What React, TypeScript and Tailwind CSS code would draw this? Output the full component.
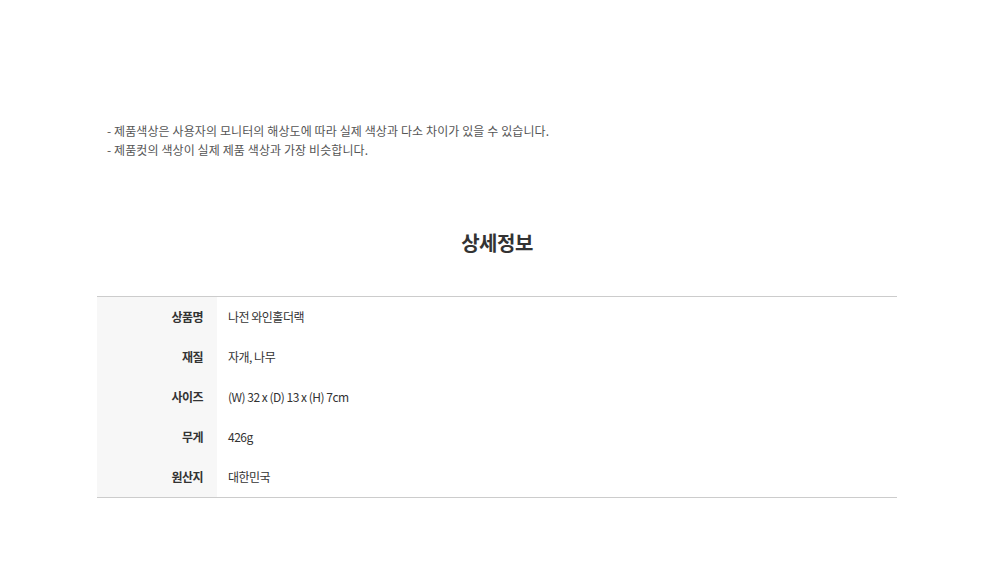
const notes = [
  '- 제품색상은 사용자의 모니터의 해상도에 따라 실제 색상과 다소 차이가 있을 수 있습니다.',
  '- 제품컷의 색상이 실제 제품 색상과 가장 비슷합니다.',
]

const specs = [
  { label: '상품명', value: '나전 와인홀더랙' },
  { label: '재질', value: '자개, 나무' },
  { label: '사이즈', value: '(W) 32 x (D) 13 x (H) 7cm' },
  { label: '무게', value: '426g' },
  { label: '원산지', value: '대한민국' },
]

export default function App() {
  return (
    <div className="min-h-[569px] bg-white pl-[2px] font-['Noto_Sans_CJK_KR','Noto_Sans',sans-serif] text-[#333]">
      <div className="mx-auto w-[800px] pt-[121px]">
        <div className="pl-[10px] text-[12px] leading-[19px] tracking-[0.1px] text-[#555]">
          {notes.map((n, i) => (
            <p key={i}>{n}</p>
          ))}
        </div>
        <h2 className="mt-[69px] text-center text-[20px] font-bold leading-[30px] tracking-[-0.5px] text-[#333]">
          상세정보
        </h2>
        <table className="mt-[38px] w-full border-collapse border-y border-[#ccc] text-[12px] tracking-[-0.5px]">
          <tbody>
            {specs.map((s, i) => (
              <tr key={s.label} className={i === specs.length - 1 ? 'h-[41px]' : 'h-[40px]'}>
                <th className="w-[120px] bg-[#f7f7f7] pr-[14px] text-right font-bold text-[#333]">{s.label}</th>
                <td className="pl-[11px] text-left text-[#333]">{s.value}</td>
              </tr>
            ))}
          </tbody>
        </table>
      </div>
    </div>
  )
}
